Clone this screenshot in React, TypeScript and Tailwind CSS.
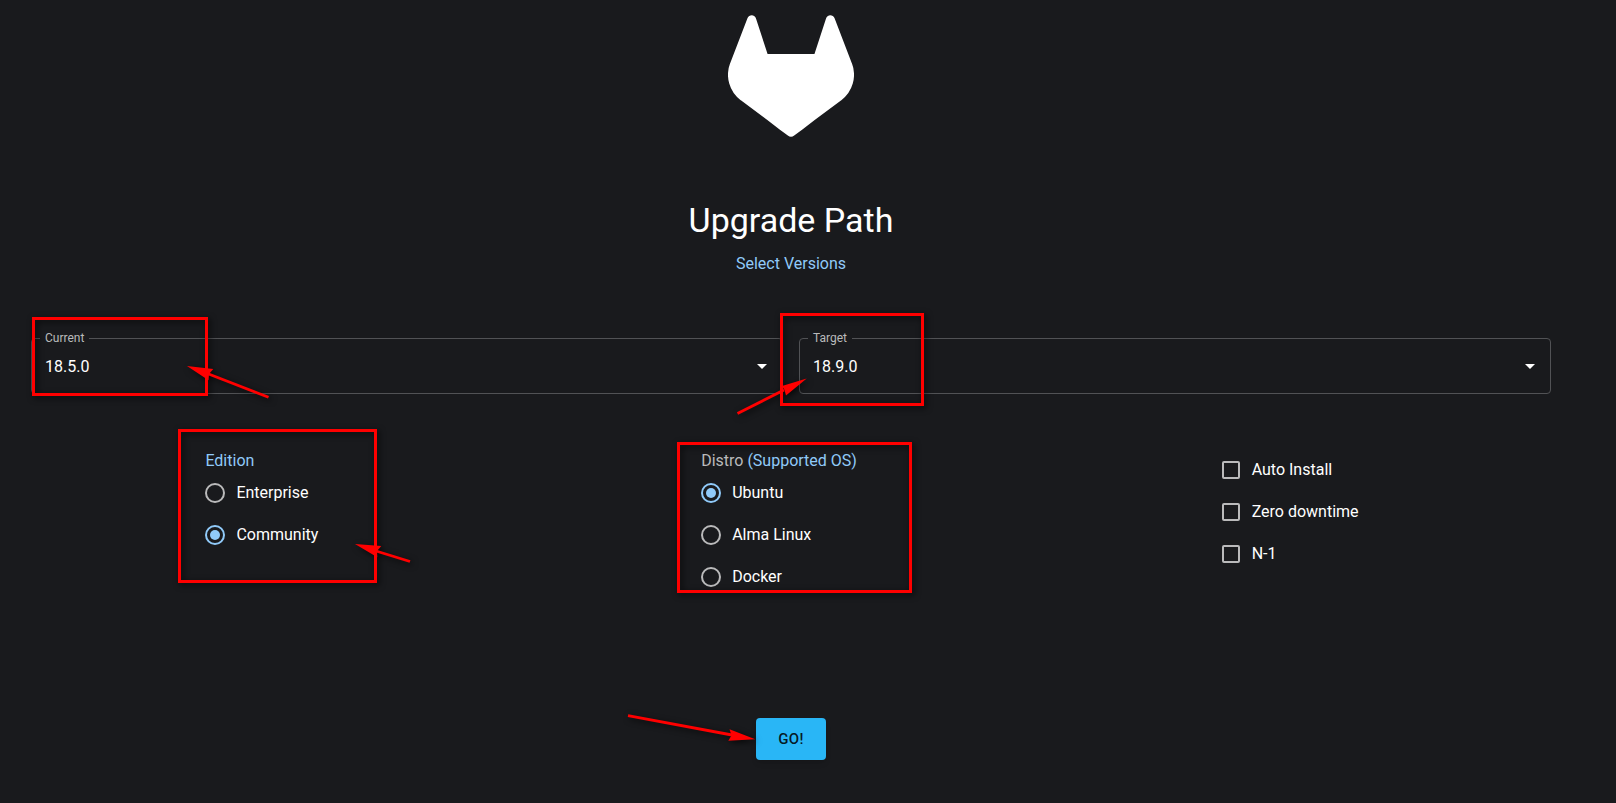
import { useState } from "react";

const versions = ["18.5.0", "18.6.0", "18.7.0", "18.8.0", "18.9.0"];

function VersionSelect({ id, label, initial }: { id: string; label: string; initial: string }) {
  const [value, setValue] = useState(initial);
  return (
    <div className="relative h-14 flex-1 rounded border border-[#515255]">
      <label
        htmlFor={id}
        className="absolute -top-2 left-2 bg-[#191a1d] px-[5px] text-xs leading-[14px] text-[#bababb]"
      >
        {label}
      </label>
      <select
        id={id}
        value={value}
        onChange={(e) => setValue(e.target.value)}
        className="h-full w-full appearance-none bg-transparent pt-[2px] pr-8 pl-[13px] text-base text-white outline-none"
      >
        {versions.map((v) => (
          <option key={v} className="bg-[#191a1d]">{v}</option>
        ))}
      </select>
      <svg viewBox="0 0 24 24" className="pointer-events-none absolute top-[15px] right-2 size-6 fill-white">
        <path d="M7 10l5 5 5-5z" />
      </svg>
    </div>
  );
}

function RadioList({ name, options, initial }: { name: string; options: string[]; initial: string }) {
  const [value, setValue] = useState(initial);
  return (
    <>
      {options.map((option) => (
        <label key={option} className="mr-[18px] flex h-[42px] items-center gap-[11px]">
          <input
            type="radio"
            name={name}
            checked={value === option}
            onChange={() => setValue(option)}
            className="size-5 appearance-none rounded-full border-2 border-[#bababb] p-[3px] checked:border-[#90caf9] checked:bg-[#90caf9] checked:bg-clip-content"
          />
          {option}
        </label>
      ))}
    </>
  );
}

function Arrow({ tail, head }: { tail: string; head: string }) {
  return (
    <>
      <path d={tail} stroke="#ff0000" strokeWidth="2.8" fill="none" />
      <path d={head} fill="#ff0000" />
    </>
  );
}

function Annotations() {
  return (
    <svg
      aria-hidden="true"
      width="1616"
      height="803"
      className="pointer-events-none absolute top-0 left-0 drop-shadow-[2px_2px_3px_rgba(0,0,0,0.75)]"
    >
      <g fill="none" stroke="#ff0000" strokeWidth="3">
        <rect x="33.5" y="318.5" width="173" height="76" />
        <rect x="781.5" y="314.5" width="141" height="90" />
        <rect x="179.5" y="430.5" width="196" height="151" />
        <rect x="678.5" y="443.5" width="232" height="148" />
      </g>
      <Arrow tail="M268.5 397.3L208 373.8" head="M187 366L213.3 369L209 374L208.5 380.3Z" />
      <Arrow tail="M737.5 413.5L784 390" head="M806.7 378.6L782 386L784.5 390L786 395.5Z" />
      <Arrow tail="M410 561.5L376 551" head="M355 544L381.3 546L377 551L377.3 557.3Z" />
      <Arrow tail="M628 715.7L732 735" head="M755.3 739.3L729.5 729.3L731.5 735.5L728.3 740.7Z" />
    </svg>
  );
}

export default function App() {
  return (
    <main className="relative min-h-screen overflow-hidden bg-[#191a1d] pt-[13px] pr-[65px] pb-10 pl-[31px] font-['Roboto',sans-serif] text-base text-white">
      <header className="flex flex-col items-center">
        <svg viewBox="0 0 24 24" className="size-[126px] fill-white" role="img" aria-label="GitLab">
          <path d="m23.6004 9.5927-.0337-.0862L20.3.9814a.851.851 0 0 0-.3362-.405.8748.8748 0 0 0-.9997.0539.8748.8748 0 0 0-.29.4399l-2.2055 6.748H7.5375l-2.2057-6.748a.8573.8573 0 0 0-.29-.4412.8748.8748 0 0 0-.9997-.0537.8585.8585 0 0 0-.3362.4049L.4332 9.5015l-.0325.0862a6.0657 6.0657 0 0 0 2.0119 7.0105l.0113.0087.03.0213 4.976 3.7264 2.462 1.8633 1.4995 1.1321a1.0085 1.0085 0 0 0 1.2197 0l1.4995-1.1321 2.4619-1.8633 5.006-3.7489.0125-.01a6.0682 6.0682 0 0 0 2.0094-7.003z" />
        </svg>
        <h1 className="mt-[60px] text-[34px] leading-[42px]">Upgrade Path</h1>
        <a href="#versions" className="mt-[11px] leading-6 text-[#90caf9]">Select Versions</a>
      </header>

      <form onSubmit={(e) => e.preventDefault()}>
        <div id="versions" className="mt-[62px] flex gap-4">
          <VersionSelect id="current" label="Current" initial="18.5.0" />
          <VersionSelect id="target" label="Target" initial="18.9.0" />
        </div>

        <div className="mt-[55px] flex items-start justify-around gap-4">
          <fieldset>
            <legend className="leading-[23px] text-[#90caf9]">
              <a href="#edition">Edition</a>
            </legend>
            <RadioList name="edition" options={["Enterprise", "Community"]} initial="Community" />
          </fieldset>
          <fieldset>
            <legend className="leading-[23px] text-[#bababb]">
              Distro <a href="#supported-os" className="text-[#90caf9]">(Supported OS)</a>
            </legend>
            <RadioList name="distro" options={["Ubuntu", "Alma Linux", "Docker"]} initial="Ubuntu" />
          </fieldset>
          <div>
            {["Auto Install", "Zero downtime", "N-1"].map((option) => (
              <label key={option} className="mr-[18px] flex h-[42px] items-center gap-3">
                <input
                  type="checkbox"
                  className="size-[18px] appearance-none rounded-xs border-2 border-[#bababb] checked:border-[#90caf9] checked:bg-[#90caf9]"
                />
                {option}
              </label>
            ))}
          </div>
        </div>

        <div className="mt-[120px] flex justify-center">
          <button
            type="submit"
            className="rounded bg-[#29b6f6] px-[22px] py-2 text-[15px] leading-[26px] font-medium tracking-wide text-black/87 shadow-md"
          >
            GO!
          </button>
        </div>
      </form>
      <Annotations />
    </main>
  );
}
